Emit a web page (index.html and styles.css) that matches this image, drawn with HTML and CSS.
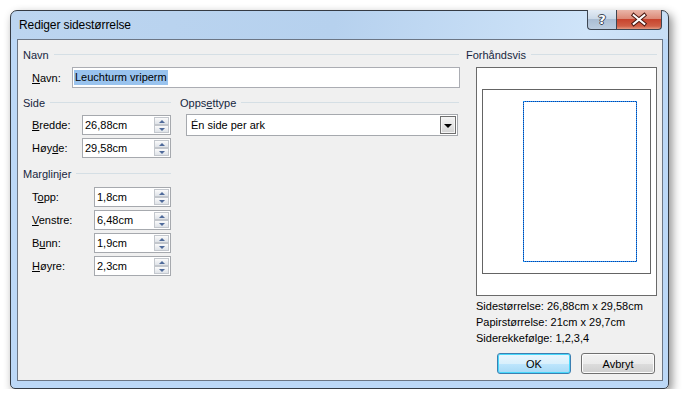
FILE: index.html
```html
<!DOCTYPE html>
<html>
<head>
<meta charset="utf-8">
<title>Rediger sidestørrelse</title>
<link rel="stylesheet" href="styles.css">
</head>
<body>
<div class="window">
  <div class="titlebar">
    <span class="title">Rediger sidestørrelse</span>
    <div class="caption-btns">
      <div class="cbtn help"><span>?</span></div>
      <div class="cbtn close">
        <svg width="46" height="19" viewBox="0 0 46 19">
          <path d="M17.5 5 L28.5 14 M28.5 5 L17.5 14" stroke="#4a1810" stroke-width="4.2" stroke-linecap="square" fill="none"/>
          <path d="M17.5 5 L28.5 14 M28.5 5 L17.5 14" stroke="#ffffff" stroke-width="2.2" stroke-linecap="square" fill="none"/>
        </svg>
      </div>
    </div>
  </div>
  <div class="client">
    <div class="leftcol">
      <div class="hdr"><span>Navn</span><i></i></div>
      <div class="name-row">
        <label class="lbl lbl-name"><u>N</u>avn:</label>
        <div class="textbox"><span class="sel">Leuchturm vriperm</span></div>
      </div>
      <div class="split">
        <div class="sub-left">
          <div class="hdr"><span>Side</span><i></i></div>
          <div class="frow first">
            <label class="lbl lbl-side"><u>B</u>redde:</label>
            <div class="spin side"><span class="val">26,88cm</span><div class="spinbtns"><b class="up"></b><b class="down"></b></div></div>
          </div>
          <div class="frow">
            <label class="lbl lbl-side">Høy<u>d</u>e:</label>
            <div class="spin side"><span class="val">29,58cm</span><div class="spinbtns"><b class="up"></b><b class="down"></b></div></div>
          </div>
          <div class="hdr hdr-marg"><span>Marglinjer</span><i></i></div>
          <div class="frow first2">
            <label class="lbl lbl-marg">T<u>o</u>pp:</label>
            <div class="spin marg"><span class="val">1,8cm</span><div class="spinbtns"><b class="up"></b><b class="down"></b></div></div>
          </div>
          <div class="frow">
            <label class="lbl lbl-marg"><u>V</u>enstre:</label>
            <div class="spin marg"><span class="val">6,48cm</span><div class="spinbtns"><b class="up"></b><b class="down"></b></div></div>
          </div>
          <div class="frow">
            <label class="lbl lbl-marg">B<u>u</u>nn:</label>
            <div class="spin marg"><span class="val">1,9cm</span><div class="spinbtns"><b class="up"></b><b class="down"></b></div></div>
          </div>
          <div class="frow">
            <label class="lbl lbl-marg"><u>H</u>øyre:</label>
            <div class="spin marg"><span class="val">2,3cm</span><div class="spinbtns"><b class="up"></b><b class="down"></b></div></div>
          </div>
        </div>
        <div class="sub-right">
          <div class="hdr"><span>Opps<u>e</u>ttype</span><i></i></div>
          <div class="combo">
            <span class="val">Én side per ark</span>
            <div class="combo-btn"><b></b></div>
          </div>
        </div>
      </div>
    </div>
    <div class="rightcol">
      <div class="hdr"><span>Forhåndsvis</span><i></i></div>
      <div class="preview">
        <div class="page"><div class="margins"></div></div>
      </div>
      <div class="info">
        <div>Sidestørrelse: 26,88cm x 29,58cm</div>
        <div>Papirstørrelse: 21cm x 29,7cm</div>
        <div>Siderekkefølge: 1,2,3,4</div>
      </div>
      <div class="buttons">
        <button class="btn default">OK</button>
        <button class="btn">Avbryt</button>
      </div>
    </div>
  </div>
</div>
</body>
</html>
```

FILE: styles.css
```css
* { box-sizing: border-box; }
html, body { margin: 0; padding: 0; background: #ffffff; }
body {
  font-family: "Liberation Sans", Arial, sans-serif;
  font-size: 11px;
  color: #000;
  padding: 10px 0 0 10px;
}

.window {
  width: 659px;
  height: 379px;
  border: 1px solid #353b44;
  border-radius: 7px 7px 5px 5px;
  padding: 0 5px 7px 6px;
  display: flex;
  flex-direction: column;
  background:
    linear-gradient(180deg, rgba(255,255,255,0) 0px, rgba(255,255,255,0) 28px, #bcd8f7 28px),
    linear-gradient(100deg, #bcd5f0 0%, #b6d1ee 45%, #cfe4f9 80%, #c2daf3 100%);
  box-shadow: 3px 4px 10px rgba(0,0,0,0.45);
}

.titlebar {
  height: 28px;
  display: flex;
  align-items: center;
}
.title {
  font-size: 12px;
  padding-left: 2px;
  padding-bottom: 1px;
  color: #000;
  letter-spacing: -0.1px;
}
.caption-btns {
  margin-left: auto;
  margin-right: 1px;
  align-self: flex-start;
  margin-top: -1px;
  display: flex;
  height: 20px;
}
.cbtn {
  height: 20px;
  border: 1px solid #3d4652;
  border-top: none;
  display: flex;
  align-items: center;
  justify-content: center;
}
.help {
  width: 29px;
  border-right: none;
  border-radius: 0 0 0 4px;
  background: linear-gradient(180deg, #e4ecf5 0%, #cbd9e8 45%, #aabdd3 50%, #bccde0 100%);
}
.help span {
  font-family: "DejaVu Sans", sans-serif;
  font-weight: bold;
  font-size: 13px;
  color: #fff;
  line-height: 1;
  text-shadow: 1px 0 0 #3a4656, -1px 0 0 #3a4656, 0 1px 0 #3a4656, 0 -1px 0 #3a4656;
}
.close {
  width: 46px;
  border-radius: 0 0 4px 0;
  background: linear-gradient(180deg, #eab6a9 0%, #dc8a78 45%, #c7442e 50%, #d05f46 85%, #e39a82 100%);
}
.close svg { display: block; }

.client {
  flex: 1;
  background: #f0f0f0;
  border: 1px solid #6c7685;
  display: flex;
  padding: 8px 5px 0 5px;
}

.hdr {
  height: 13px;
  display: flex;
  align-items: center;
  color: #172640;
}
.hdr span { white-space: nowrap; }
.hdr i {
  flex: 1;
  height: 1px;
  background: #d5dfe5;
  margin-left: 5px;
}

.leftcol { width: 436px; }
.rightcol { width: 191px; margin-left: 7px; }

.lbl { display: block; flex: none; }
.lbl-name { width: 40px; }
.lbl-side { width: 50px; }
.lbl-marg { width: 62px; }

.name-row {
  margin-top: 6px;
  height: 21px;
  display: flex;
  align-items: center;
  padding-left: 9px;
}
.textbox {
  flex: 1;
  height: 21px;
  border: 1px solid #abadb3;
  background: #fff;
  display: flex;
  align-items: center;
  padding-left: 1px;
  margin-right: -1px;
}
.sel {
  background: #99c3ee;
  padding: 1px 1px 2px 1px;
}

.split { display: flex; margin-top: 8px; }
.sub-left { width: 148px; }
.sub-right { flex: 1; margin-left: 9px; }

.frow {
  height: 20px;
  margin-top: 3px;
  padding-left: 9px;
  display: flex;
  align-items: center;
}
.frow.first { margin-top: 6px; }
.frow.first2 { margin-top: 7px; }
.hdr-marg { margin-top: 9px; }

.spin {
  height: 20px;
  border: 1px solid #a6a9ae;
  background: #fff;
  display: flex;
  padding: 1px 1px 1px 2px;
}
.spin.side { width: 89px; }
.spin.marg { width: 77px; }
.spin .val { flex: 1; display: flex; align-items: center; }
.spinbtns {
  width: 15px;
  display: flex;
  flex-direction: column;
  gap: 0;
}
.spinbtns b {
  flex: 1;
  border: 1px solid #c3c7cd;
  background: linear-gradient(180deg, #fbfbfb 0%, #eceef1 50%, #dfe3e8 100%);
  display: flex;
  align-items: center;
  justify-content: center;
}
.spinbtns b::after {
  content: "";
  width: 0;
  height: 0;
  border-left: 3px solid transparent;
  border-right: 3px solid transparent;
}
.spinbtns b.up::after { border-bottom: 3px solid #4f6a9a; }
.spinbtns b.down::after { border-top: 3px solid #4f6a9a; }

.combo {
  margin-top: 5px;
  margin-left: 6px;
  width: 272px;
  height: 22px;
  border: 1px solid #a6a9ae;
  background: #fff;
  display: flex;
  align-items: stretch;
  padding: 1px;
}
.combo .val { flex: 1; display: flex; align-items: center; padding-left: 3px; }
.combo-btn {
  width: 16px;
  border: 1px solid #6f6f6f;
  box-shadow: inset 0 0 0 1px #f4f4f4;
  background: linear-gradient(180deg, #f4f4f4 0%, #e6e6e6 50%, #d2d2d2 100%);
  display: flex;
  align-items: center;
  justify-content: center;
}
.combo-btn b {
  width: 0; height: 0;
  border-left: 4px solid transparent;
  border-right: 4px solid transparent;
  border-top: 4px solid #000;
  margin-top: 1px;
}

.preview {
  margin-top: 6px;
  margin-left: 10px;
  width: 181px;
  height: 229px;
  border: 1px solid #6a6a6a;
  background: #fff;
  display: flex;
  align-items: center;
  justify-content: center;
}
.page {
  width: 169px;
  height: 185px;
  border: 1px solid #646464;
  padding: 11px 13px 11px 40px;
  display: flex;
}
.margins {
  flex: 1;
  border: 1px dotted #1a9cff;
  background: linear-gradient(#fff, #fff) padding-box, #1a3f9a border-box;
}

.info {
  margin-top: 2px;
  padding-left: 10px;
  line-height: 16px;
}

.buttons {
  margin-top: 7px;
  display: flex;
  justify-content: flex-end;
  gap: 10px;
  padding-right: 2px;
}
.btn {
  width: 74px;
  height: 21px;
  font-family: "Liberation Sans", Arial, sans-serif;
  font-size: 11px;
  color: #000;
  border: 1px solid #707070;
  border-radius: 3px;
  background: linear-gradient(180deg, #f2f2f2 0%, #ebebeb 50%, #dddddd 51%, #cfcfcf 100%);
  box-shadow: inset 0 0 0 1px #fcfcfc;
  padding: 0;
}
.btn.default {
  border-color: #3c7fb1;
  background: linear-gradient(180deg, #eaf6fd 0%, #d9f0fc 50%, #bee6fd 51%, #a7d9f5 100%);
  box-shadow: inset 0 0 0 1px #48d8fb;
}
```
